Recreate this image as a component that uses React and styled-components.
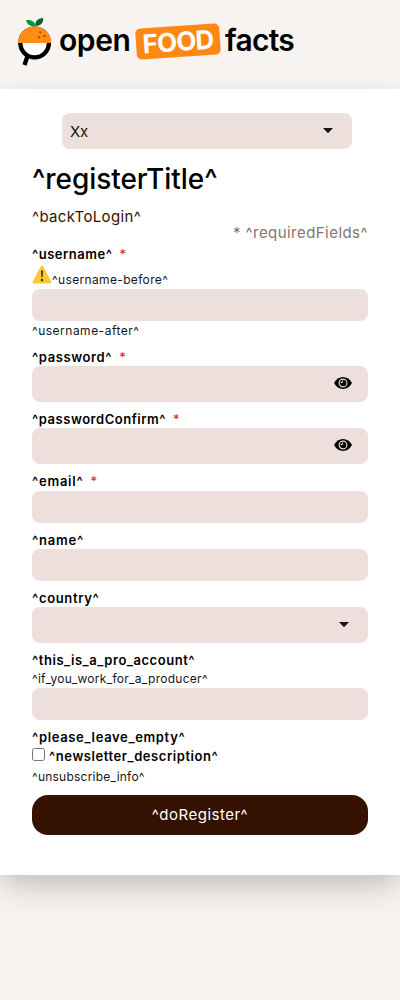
import React from "react";
import styled, { createGlobalStyle } from "styled-components";

const Global = createGlobalStyle`
  * { box-sizing: border-box; }
  body { margin: 0; background: #f6f3f0; font-family: Inter, "Open Sans", sans-serif; color: #161616; }
`;
const Page = styled.div`
  min-height: 1000px;
  background: #f6f3f0;
  overflow: hidden;
`;
const Header = styled.header`
  height: 89px;
  padding: 17px 0 0 17px;
  display: flex;
  align-items: flex-start;
`;
const OrangeIcon = styled.svg`
  width: 35px;
  height: 50px;
  flex: none;
`;
const LogoWord = styled.span`
  width: ${(p) => p.$w}px;
  flex: none;
  font: 600 30px/40px Inter, sans-serif;
  color: #000;
  margin: 3px 0 0 ${(p) => p.$gap}px;
  letter-spacing: ${(p) => p.$ls}px;
`;
const Badge = styled.span`
  width: 84px;
  height: 31px;
  flex: none;
  margin: 9px 0 0 4px;
  border-radius: 5px;
  background: #ff8714;
  color: #fff;
  font: 700 26px/32px Inter, sans-serif;
  letter-spacing: -0.8px;
  text-align: center;
  transform: rotate(-4deg);
`;
const Card = styled.main`
  height: 786px;
  padding: 24px 32px 0;
  background: #fff;
  box-shadow: 0 18px 30px -4px rgba(0, 0, 0, 0.16), 0 4px 18px 0 rgba(0, 0, 0, 0.07);
`;
const Field = styled.div`
  height: ${(p) => (p.$tall ? 36 : 32)}px;
  padding: 0 ${(p) => p.$end || 16}px 0 8px;
  margin: ${(p) => p.$m || "0"};
  display: flex;
  align-items: center;
  justify-content: space-between;
  border-radius: 8px;
  background: #eddfdb;

  svg { margin-bottom: 2px; }
`;
const Line = styled.div`
  height: ${(p) => p.$h || 16}px;
  line-height: ${(p) => p.$h || 16}px;
  margin-top: ${(p) => p.$top || 0}px;
  display: flex;
  align-items: center;
  justify-content: ${(p) => (p.$right ? "flex-end" : "flex-start")};
  white-space: nowrap;
`;
const Title = styled.h1`
  margin: 11px 0 11px;
  font-size: 28px;
  line-height: 38px;
  font-weight: 500;
  color: #000;
  letter-spacing: ${(p) => p.$ls}px;
`;
const Body = styled.span`
  font-size: 15px;
  color: ${(p) => p.$color || "#161616"};
  letter-spacing: ${(p) => p.$ls || 0}px;
`;
const Label = styled.label`
  font-size: 13px;
  font-weight: 600;
  color: #000;
  letter-spacing: ${(p) => p.$ls || 0}px;
`;
const Hint = styled.span`
  padding-top: ${(p) => p.$drop || 1}px;
  font-size: 12px;
  color: #161616;
  letter-spacing: ${(p) => p.$ls || 0}px;
`;
const Star = styled.span`
  margin-left: 7px;
  font-size: 13px;
  color: #d22020;
`;
const Warning = styled.svg`
  width: 20px;
  height: 20px;
  margin-bottom: 4px;
  flex: none;
`;
const Check = styled.input`
  width: 13px;
  height: 13px;
  margin: 0 4px 3px 0;
`;
const Button = styled.button`
  display: block;
  width: 100%;
  height: 40px;
  margin-top: 11px;
  padding: 0;
  border: 0;
  border-radius: 16px;
  background: #341100;
  color: #fff;
  font: 400 15px/40px Inter, sans-serif;
  letter-spacing: ${(p) => p.$ls}px;
`;

const Arrow = () => (
  <svg width="10" height="5" viewBox="0 0 10 5"><path d="M0 0h10L5.8 4.6q-.8.7-1.6 0z" fill="#161616" /></svg>
);
const Eye = () => (
  <svg width="18" height="12" viewBox="0 0 18 12">
    <path d="M0 6C2 2.200 5.300 0 9 0s7 2.200 9 6c-2 3.800-5.300 6-9 6S2 9.800 0 6z" fill="#000" />
    <circle cx="9" cy="6" r="3.900" fill="none" stroke="#eddfdb" strokeWidth="1.100" />
    <path d="M8.800 3.600A2.400 2.400 0 0 1 6.600 5.800" fill="none" stroke="#eddfdb" strokeWidth="1.100" />
  </svg>
);

export default function App() {
  return (
    <Page>
      <Global />
      <Header>
        <OrangeIcon viewBox="0 0 35 50">
          <path d="M10.500 39 7.500 48" stroke="#000" strokeWidth="4.300" />
          <circle cx="17.600" cy="26" r="16.500" fill="#000" />
          <path d="M5.500 26h24.200a12.100 12.200 0 0 1-24.200 0z" fill="#fff" />
          <path d="M1 26a16.600 16.500 0 0 1 33.200 0z" fill="#ff8c14" />
          <path d="M18.500 9c-1-4 2-8 7.700-8 .4 5-2.700 8-7.700 8z" fill="#00652b" />
          <path d="M18.500 9C14 10 10 7.500 9 3.200 14 2 18 4.500 18.500 9z" fill="#0a9638" />
          <g fill="#8a4100"><circle cx="23.200" cy="15.300" r="1" /><circle cx="22.200" cy="20.300" r="1" /><circle cx="27.500" cy="19" r="1" /></g>
        </OrangeIcon>
        <LogoWord $w={73} $gap={7} $ls={-0.4}>open</LogoWord>
        <Badge>FOOD</Badge>
        <LogoWord $w={75} $gap={5} $ls={-0.7}>facts</LogoWord>
      </Header>
      <Card>
        <Field $tall $m="0 16px 0 30px" $end={19}><Body $ls={-0.3}>Xx</Body><Arrow /></Field>
        <Title $ls={-0.05}>^registerTitle^</Title>
        <Line><Body $color="#341100" $ls={0.35}>^backToLogin^</Body></Line>
        <Line $right><Body $color="#85746c" $ls={0.45}>* ^requiredFields^</Body></Line>
        <Line $top={5}><Label $ls={0.5}>^username^</Label><Star>*</Star></Line>
        <Line $top={2} $h={25}>
          <Warning viewBox="0 0 20 20">
            <path d="M8.700 1.400q1.300-1.800 2.600 0l8 15.300q.6 1.800-1.200 1.800H1.900q-1.800 0-1.200-1.800z" fill="#fcc92e" />
            <path d="M8.900 5.500h2.200l-.5 6.800H9.400z" fill="#3d3528" /><circle cx="10" cy="15" r="1.300" fill="#3d3528" />
          </Warning>
          <Hint $drop={5} $ls={0.35}>^username-before^</Hint>
        </Line>
        <Field />
        <Line $top={1}><Hint $ls={0.5}>^username-after^</Hint></Line>
        <Line $top={11}><Label $ls={0.6}>^password^</Label><Star>*</Star></Line>
        <Field $tall $m="1px 0 0"><span /><Eye /></Field>
        <Line $top={9}><Label $ls={0.53}>^passwordConfirm^</Label><Star>*</Star></Line>
        <Field $tall $m="1px 0 0"><span /><Eye /></Field>
        <Line $top={9}><Label $ls={0.75}>^email^</Label><Star>*</Star></Line>
        <Field $m="2px 0 0" />
        <Line $top={9}><Label $ls={0.8}>^name^</Label></Line>
        <Field $m="1px 0 0" />
        <Line $top={9}><Label $ls={0.65}>^country^</Label></Line>
        <Field $tall $m="1px 0 0" $end={19}><span /><Arrow /></Field>
        <Line $top={9}><Label $ls={0.54}>^this_is_a_pro_account^</Label></Line>
        <Line $top={2}><Hint $ls={0.28}>^if_you_work_for_a_producer^</Hint></Line>
        <Field $m="2px 0 0" />
        <Line $top={9}><Label $ls={0.65}>^please_leave_empty^</Label></Line>
        <Line $top={3}><Check type="checkbox" /><Label $ls={0.56}>^newsletter_description^</Label></Line>
        <Line $top={4}><Hint $ls={0.23}>^unsubscribe_info^</Hint></Line>
        <Button $ls={0.5}>^doRegister^</Button>
      </Card>
    </Page>
  );
}
